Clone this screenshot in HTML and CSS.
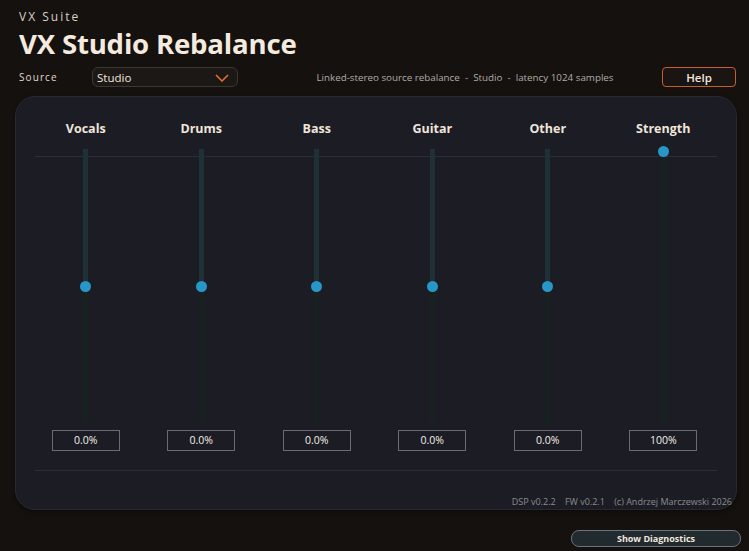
FILE: index.html
```html
<!DOCTYPE html>
<html lang="en">
<head>
    <meta charset="UTF-8">
    <title>VX Studio Rebalance</title>
    <link rel="stylesheet" href="styles.css">
</head>
<body>
    <div class="app">
        <header class="header">
            <div class="suite">VX Suite</div>
            <h1 class="title">VX Studio Rebalance</h1>
            <div class="toolbar">
                <span class="source-label">Source</span>
                <div class="select">
                    <span>Studio</span>
                    <svg width="14" height="8" viewBox="0 0 14 8"><path d="M1 1 L7 7 L13 1" fill="none" stroke="#e0702c" stroke-width="1.6"/></svg>
                </div>
                <span class="info">Linked-stereo source rebalance &nbsp;-&nbsp; Studio &nbsp;-&nbsp; latency 1024 samples</span>
                <button class="help">Help</button>
            </div>
        </header>

        <main class="panel">
            <div class="columns">
                <div class="col">
                    <div class="label">Vocals</div>
                    <div class="slider"><div class="track"><div class="fill" style="height: 50%"></div><div class="thumb" style="top: 50%"></div></div></div>
                    <div class="value">0.0%</div>
                </div>
                <div class="col">
                    <div class="label">Drums</div>
                    <div class="slider"><div class="track"><div class="fill" style="height: 50%"></div><div class="thumb" style="top: 50%"></div></div></div>
                    <div class="value">0.0%</div>
                </div>
                <div class="col">
                    <div class="label">Bass</div>
                    <div class="slider"><div class="track"><div class="fill" style="height: 50%"></div><div class="thumb" style="top: 50%"></div></div></div>
                    <div class="value">0.0%</div>
                </div>
                <div class="col">
                    <div class="label">Guitar</div>
                    <div class="slider"><div class="track"><div class="fill" style="height: 50%"></div><div class="thumb" style="top: 50%"></div></div></div>
                    <div class="value">0.0%</div>
                </div>
                <div class="col">
                    <div class="label">Other</div>
                    <div class="slider"><div class="track"><div class="fill" style="height: 50%"></div><div class="thumb" style="top: 50%"></div></div></div>
                    <div class="value">0.0%</div>
                </div>
                <div class="col">
                    <div class="label">Strength</div>
                    <div class="slider"><div class="track"><div class="fill" style="height: 0%"></div><div class="thumb" style="top: 0.8%"></div></div></div>
                    <div class="value">100%</div>
                </div>
            </div>
            <div class="footer">DSP v0.2.2 &nbsp;&nbsp; FW v0.2.1 &nbsp;&nbsp; (c) Andrzej Marczewski 2026</div>
        </main>

        <div class="bottom">
            <button class="diag">Show Diagnostics</button>
        </div>
    </div>
</body>
</html>
```

FILE: styles.css
```css
/* VX Studio Rebalance */
body {
    margin: 0;
    background: #15110f;
    font-family: 'Open Sans', 'Noto Sans', sans-serif;
    color: #f1e7dc;
    width: 749px;
    height: 551px;
    overflow: hidden;
}

.header {
    padding: 9px 13px 0 19px;
}

.suite {
    font-size: 12px;
    letter-spacing: 2px;
    color: #d9d0c6;
    line-height: 16px;
}

.title {
    margin: 0;
    font-size: 27.6px;
    font-weight: 700;
    line-height: 36px;
    color: #f4eadf;
    letter-spacing: -0.2px;
}

.toolbar {
    display: flex;
    align-items: center;
    height: 20px;
    margin-top: 6px;
}

.source-label {
    font-size: 10px;
    letter-spacing: 1.1px;
    color: #e2d8cd;
    width: 73px;
}

.select {
    width: 132px;
    height: 18px;
    border: 1px solid #3d3733;
    border-radius: 6px;
    background: #1c1816;
    display: flex;
    align-items: center;
    justify-content: space-between;
    padding: 0 8px 0 4px;
    font-size: 11.5px;
    color: #f1e7dc;
}

.select svg {
    margin-top: 1px;
}

.info {
    flex: 1;
    text-align: center;
    font-size: 9.8px;
    color: #b1aca6;
    padding-left: 30px;
}

.help {
    width: 74px;
    height: 20px;
    border: 1px solid #c3602b;
    border-radius: 4px;
    background: #1a1413;
    color: #f1e7dc;
    font-family: inherit;
    font-size: 11.5px;
    font-weight: 600;
    padding: 0;
}

.panel {
    margin: 9px 12px 0 15px;
    height: 414px;
    background: #1b1c24;
    border: 1px solid #282a31;
    border-radius: 20px;
    box-shadow: 0 2px 4px rgba(0, 0, 0, 0.4);
    position: relative;
    box-sizing: border-box;
}

.columns {
    display: grid;
    grid-template-columns: repeat(6, 1fr);
    padding: 0 15px 0 12px;
    position: relative;
}

.columns::before,
.columns::after {
    content: "";
    position: absolute;
    left: 19px;
    right: 19px;
    height: 1px;
    background: #2a2d35;
}

.columns::before {
    top: 59px;
}

.columns::after {
    top: 373px;
}

.col {
    display: flex;
    flex-direction: column;
    align-items: center;
}

.label {
    font-size: 12.5px;
    font-weight: 700;
    color: #efe5da;
    margin-top: 23px;
    line-height: 18px;
}

.slider {
    margin-top: 11px;
    height: 274px;
    display: flex;
    justify-content: center;
}

.track {
    width: 5px;
    height: 100%;
    background: #172220;
    position: relative;
    z-index: 1;
}

.fill {
    background: #1f3137;
}

.thumb {
    position: absolute;
    left: 50%;
    width: 11px;
    height: 11px;
    margin: -5.5px 0 0 -5.5px;
    border-radius: 50%;
    background: #2797c8;
}

.value {
    margin-top: 7px;
    width: 66px;
    height: 19px;
    border: 1px solid #686c73;
    font-size: 10.5px;
    line-height: 19px;
    text-align: center;
    color: #f5f0ea;
}

.footer {
    position: absolute;
    right: 4px;
    bottom: 1px;
    font-size: 9px;
    color: #8c8c8f;
}

.bottom {
    display: flex;
    justify-content: flex-end;
    padding: 20px 8px 0 0;
}

.diag {
    width: 170px;
    height: 17px;
    border: 1px solid #6a7479;
    border-radius: 8px;
    background: #212a2f;
    color: #f1e7dc;
    font-family: inherit;
    font-size: 9px;
    font-weight: 700;
    padding: 0;
}
```
